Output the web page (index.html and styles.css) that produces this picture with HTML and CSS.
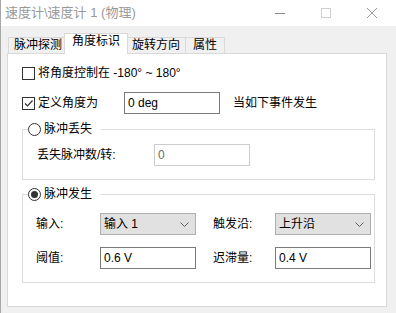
FILE: index.html
```html
<!DOCTYPE html>
<html>
  <head>
    <title>速度计 1</title>
    <link rel="stylesheet" href="styles.css">
  </head>
  <body>
    <div class="window">
      <div class="titlebar">
        <span class="title">速度计\速度计 1 (物理)</span>
        <div class="controls">
          <svg class="ctl" width="12" height="12" viewBox="0 0 12 12"><path d="M1 6.5h10" stroke="#8a8a8a" stroke-width="1"/></svg>
          <svg class="ctl" width="12" height="12" viewBox="0 0 12 12"><rect x="1.5" y="1.5" width="9" height="9" fill="none" stroke="#cfcfcf" stroke-width="1"/></svg>
          <svg class="ctl" width="12" height="12" viewBox="0 0 12 12"><path d="M1 1l10 10M11 1L1 11" stroke="#9a9a9a" stroke-width="1"/></svg>
        </div>
      </div>

      <div class="tabs">
        <span class="tab tab-wide">脉冲探测</span>
        <span class="tab tab-wide active">角度标识</span>
        <span class="tab tab-wide">旋转方向</span>
        <span class="tab tab-narrow">属性</span>
      </div>

      <div class="panel">
        <div class="row">
          <span class="check"></span>
          <span class="text">将角度控制在 -180° ~ 180°</span>
        </div>

        <div class="row row-angle">
          <span class="check">
            <svg width="11" height="11" viewBox="0 0 11 11"><path d="M2 5.5l2.5 2.5L9.5 2.5" fill="none" stroke="#333" stroke-width="1.2"/></svg>
          </span>
          <span class="text angle-label">定义角度为</span>
          <span class="field">0 deg</span>
          <span class="text event">当如下事件发生</span>
        </div>

        <fieldset class="group group-lost">
          <legend><span class="radio"></span>脉冲丢失</legend>
          <div class="lost-row">
            <span class="text lost-label">丢失脉冲数/转:</span>
            <span class="field disabled">0</span>
          </div>
        </fieldset>

        <fieldset class="group group-gen">
          <legend><span class="radio on"></span>脉冲发生</legend>
          <div class="gen-grid">
            <span class="text">输入:</span>
            <span class="combo">输入 1
              <svg width="9" height="5" viewBox="0 0 9 5"><path d="M0.5 0.5l4 4 4-4" fill="none" stroke="#606060" stroke-width="1"/></svg>
            </span>
            <span></span>
            <span class="text">触发沿:</span>
            <span class="combo">上升沿
              <svg width="9" height="5" viewBox="0 0 9 5"><path d="M0.5 0.5l4 4 4-4" fill="none" stroke="#606060" stroke-width="1"/></svg>
            </span>

            <span class="text">阈值:</span>
            <span class="field">0.6 V</span>
            <span></span>
            <span class="text">迟滞量:</span>
            <span class="field">0.4 V</span>
          </div>
        </fieldset>
      </div>
    </div>
  </body>
</html>
```

FILE: styles.css
```css
body {
  margin: 0;
  font-family: "Liberation Sans", "Noto Sans CJK SC", sans-serif;
  font-size: 12px;
  color: #000;
}

.window {
  width: 396px;
  height: 313px;
  background-color: #f0f0f0;
  box-sizing: border-box;
  border-left: 1px solid #a8a8a8;
  overflow: hidden;
}

.titlebar {
  height: 26px;
  margin-left: -1px;
  background-color: #fff;
  display: flex;
  align-items: center;
  justify-content: space-between;
}

.title {
  padding-left: 5px;
  font-size: 13px;
  line-height: 16px;
  color: #999;
}

.controls {
  display: flex;
  gap: 34px;
  padding-right: 18px;
}

.ctl {
  display: block;
}

.tabs {
  display: flex;
  align-items: flex-end;
  height: 20px;
  margin-top: 7px;
  padding-left: 7px;
}

.tab {
  box-sizing: border-box;
  height: 16px;
  border: 1px solid #d9d9d9;
  border-bottom: none;
  margin-right: -1px;
  line-height: 15px;
  text-align: center;
  background-color: #f0f0f0;
}

.tab-wide {
  width: 60px;
}

.tab-narrow {
  width: 40px;
}

.tab.active {
  position: relative;
  z-index: 1;
  width: 64px;
  height: 21px;
  margin: 0 -2px -1px -3px;
  background-color: #fff;
  padding-bottom: 5px;
}

.panel {
  box-sizing: border-box;
  width: 380px;
  height: 254px;
  margin-left: 6px;
  border: 1px solid #d9d9d9;
  background-color: #fff;
  padding-top: 8px;
}

.row {
  display: flex;
  align-items: center;
  height: 22px;
  padding-left: 14px;
}

.row-angle {
  margin-top: 8px;
}

.text {
  line-height: 15px;
  white-space: nowrap;
}

.check {
  box-sizing: border-box;
  width: 13px;
  height: 13px;
  border: 1px solid #333;
  margin-right: 3px;
  display: flex;
  align-items: center;
  justify-content: center;
}

.angle-label {
  width: 86px;
}

.field {
  box-sizing: border-box;
  width: 96px;
  height: 22px;
  border: 1px solid #7a7a7a;
  padding-left: 3px;
  line-height: 20px;
  background-color: #fff;
}

.field.disabled {
  border-color: #cccccc;
  color: #6d6d6d;
}

.event {
  margin-left: 13px;
}

.group {
  margin: 8px 11px 0 14px;
  padding: 0 0 0 5px;
  border: 1px solid #dcdcdc;
  min-width: 0;
}

.group legend {
  display: flex;
  align-items: center;
  height: 14px;
  line-height: 14px;
  padding: 0 9px 0 0;
}

.radio {
  box-sizing: border-box;
  width: 13px;
  height: 13px;
  border: 1px solid #333;
  border-radius: 50%;
  margin-right: 3px;
  display: flex;
  align-items: center;
  justify-content: center;
}

.radio.on::after {
  content: "";
  width: 7px;
  height: 7px;
  border-radius: 50%;
  background-color: #333;
}

.group-lost {
  padding-bottom: 13px;
}

.lost-row {
  display: flex;
  align-items: center;
  margin-top: 8px;
  padding-left: 9px;
}

.lost-label {
  width: 117px;
}

.group-gen {
  margin-top: 7px;
  padding-bottom: 13px;
}

.gen-grid {
  display: grid;
  grid-template-columns: 64px 96px 17px 62px 96px;
  grid-auto-rows: 22px;
  row-gap: 12px;
  align-items: center;
  margin-top: 12px;
  padding-left: 8px;
}

.combo {
  box-sizing: border-box;
  height: 22px;
  border: 1px solid #adadad;
  background-color: #e1e1e1;
  padding: 0 6px 0 3px;
  line-height: 20px;
  display: flex;
  align-items: center;
  justify-content: space-between;
}
```
